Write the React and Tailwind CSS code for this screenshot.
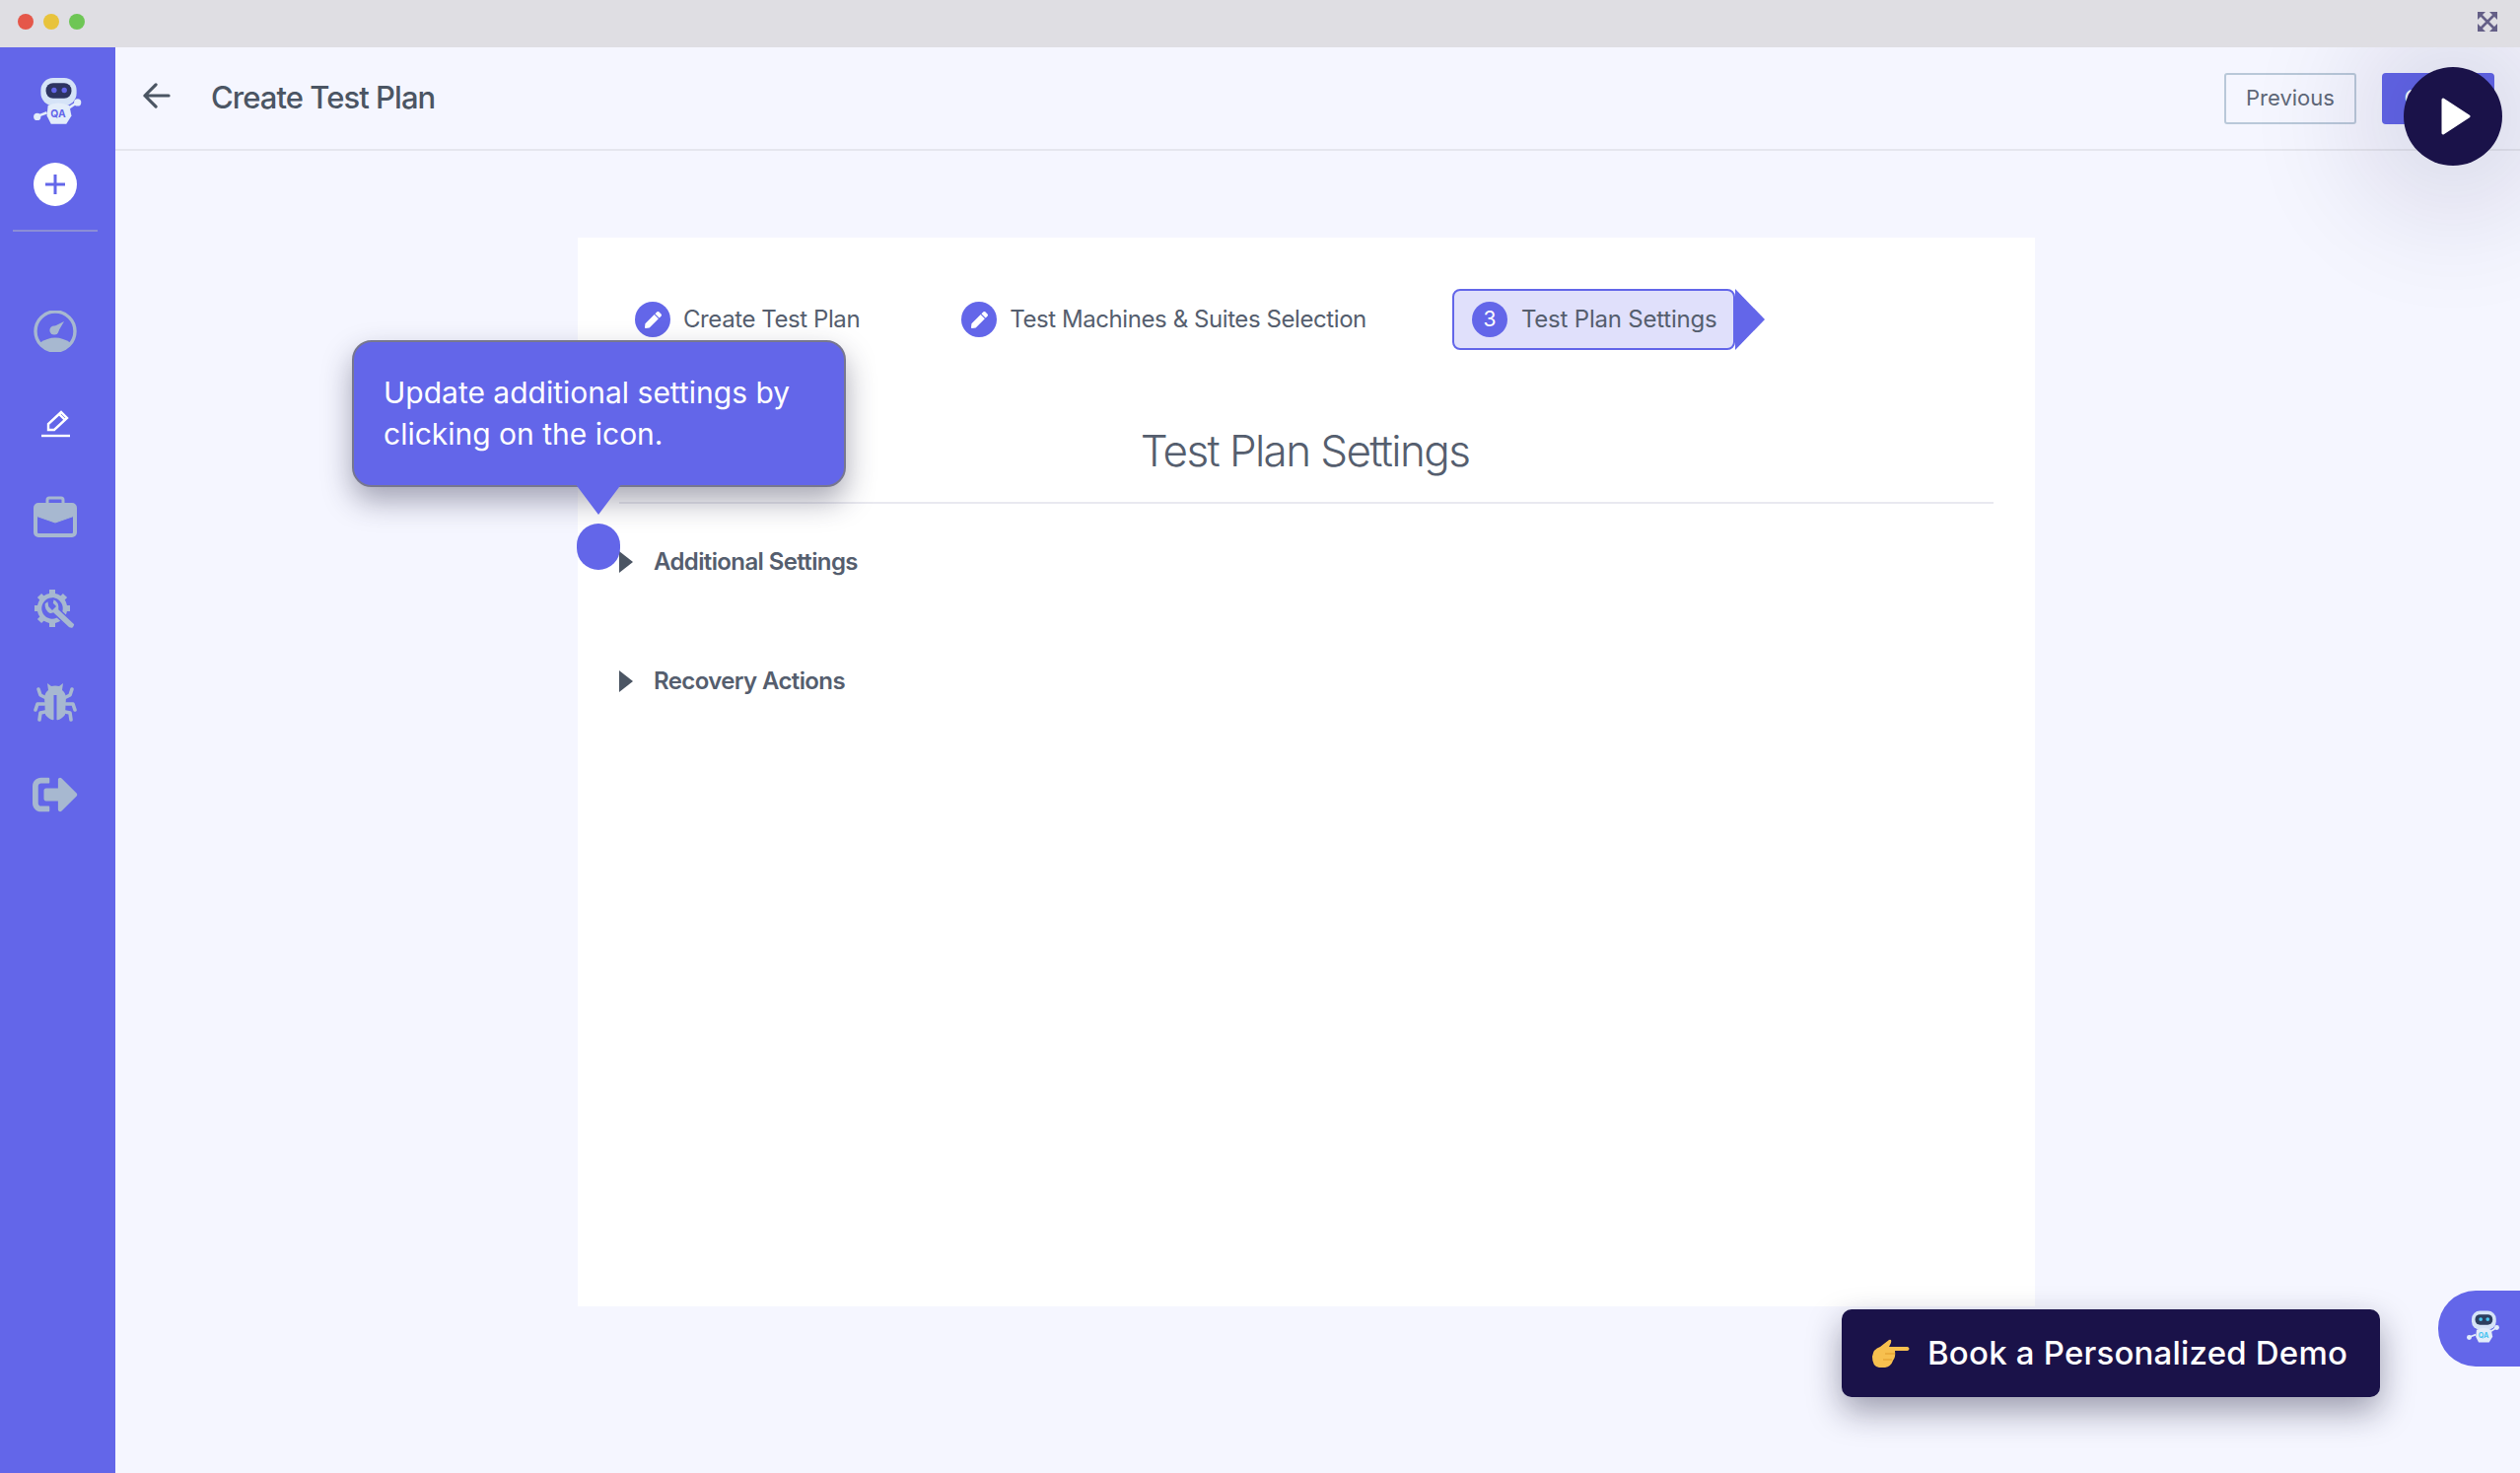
import React from 'react';
import { FaSignOutAlt, FaPen } from 'react-icons/fa';

const Robot = ({ className, visor = '#2d3461', dot = '#6366e9' }) => (
    <svg viewBox="0 0 48 56" className={className}>
        <rect x="7" y="2" width="35" height="27" rx="12" fill="#d5e3f7" />
        <rect x="12" y="7" width="25" height="15" rx="7" fill={visor} />
        <circle cx="20" cy="14" r="2.6" fill={dot} />
        <circle cx="30" cy="14" r="2.6" fill={dot} />
        <path d="M14 29 Q24 24 35 29 L37 39 L32 47 H17 L13 39 Z" fill="#e3edfa" />
        <path d="M35 31 L41 27" stroke="#e3edfa" strokeWidth="2.5" />
        <circle cx="43" cy="26" r="3.5" fill="#e3edfa" />
        <path d="M13 36 L5 39" stroke="#e3edfa" strokeWidth="2.5" />
        <circle cx="3.5" cy="40" r="3.5" fill="#e3edfa" />
        <text x="24" y="41" textAnchor="middle" fontSize="10" fontWeight="700" fill={dot} fontFamily="Inter, sans-serif">QA</text>
    </svg>
);

const Gauge = () => (
    <svg viewBox="0 0 44 42" className="w-[44px] h-[42px]" fill="#a7b8d0">
        <circle cx="22" cy="21" r="20" fill="none" stroke="#a7b8d0" strokeWidth="3.4" />
        <path d="M6 33 Q22 22 38 33 Q30 41 22 41 Q14 41 6 33 Z" />
        <circle cx="21" cy="20" r="4.6" />
        <path d="M19 17 L31 11 L24 23 Z" />
    </svg>
);

const NavPencil = () => (
    <svg viewBox="0 0 32 32" className="w-[32px] h-[32px]" fill="none" stroke="#fff" strokeWidth="2.4">
        <path d="M9 22 L9 16 L22 4 L28 10 L15 22 Z" />
        <path d="M20 6 L26 12" />
        <path d="M2 28 H31" />
    </svg>
);

const Briefcase = () => (
    <svg viewBox="0 0 44 42" className="w-[44px] h-[42px]" fill="none" stroke="#a7b8d0">
        <path d="M14 8 V4 Q14 2 16 2 H28 Q30 2 30 4 V8" strokeWidth="3" />
        <rect x="2" y="9" width="40" height="31" rx="3" strokeWidth="4" />
        <path d="M2 9 H42 V20 L22 27 L2 20 Z" fill="#a7b8d0" strokeWidth="1" />
    </svg>
);

// gear ring with a wrench lying across it
const GearWrench = () => (
    <svg viewBox="0 0 44 42" className="w-[44px] h-[42px]" fill="none">
        <g stroke="#a7b8d0" strokeWidth="6">
            <path d="M19 1 V8 M19 32 V39 M1 20 H8 M30 20 H37 M6 7 L11 12 M27 28 L32 33 M32 7 L27 12 M6 33 L11 28" />
        </g>
        <circle cx="19" cy="20" r="13" stroke="#a7b8d0" strokeWidth="4.5" />
        <path d="M15 12 L11 15 Q10 23 17 26 L20 25 L36 40 Q41 42 42 36 L26 21 Q27 13 20 10 L19 15 L22 18 L19 21 L16 18 Z" fill="#a7b8d0" stroke="#6366e9" strokeWidth="1.5" />
    </svg>
);

const Beetle = () => (
    <svg viewBox="0 0 44 40" className="w-[44px] h-[40px]" fill="#a7b8d0">
        <path d="M15 8 L14 1 L18 4 Q22 3 26 4 L30 1 L29 8 Q32 10 33 15 L32 33 Q27 39 23.5 38 V13 H20.5 V38 Q17 39 12 33 L11 15 Q12 10 15 8 Z" />
        <g fill="none" stroke="#a7b8d0" strokeWidth="3.6" strokeLinecap="round" strokeLinejoin="round">
            <path d="M11 15 L7 13 L5 7" />
            <path d="M33 15 L37 13 L39 7" />
            <path d="M11 22 H4 L2 28" />
            <path d="M33 22 H40 L42 28" />
            <path d="M12 30 L7 31 L6 38" />
            <path d="M32 30 L37 31 L38 38" />
        </g>
    </svg>
);

const ExpandIcon = () => (
    <svg viewBox="0 0 20 20" className="w-[20px] h-[20px]" fill="#645f87">
        <path d="M0 0 H8 L0 8 Z M20 0 V8 L12 0 Z M0 20 V12 L8 20 Z M20 20 H12 L20 12 Z" />
        <path d="M3 3 L17 17 M17 3 L3 17" stroke="#645f87" strokeWidth="2.6" />
    </svg>
);

const PointingHand = () => (
    <svg viewBox="0 0 40 30" className="w-[40px] h-[30px]">
        <path d="M1 18 Q2 10 9 8 L18 1 Q21 0 20 4 L18 8 H37 Q40 10 37 12 H24 Q25 18 22 22 Q20 28 14 29 H8 Q1 28 1 18 Z" fill="#f7c04f" />
        <path d="M14 15 H24 M12 21 H21" stroke="#e09a2a" strokeWidth="1.2" fill="none" />
    </svg>
);

const Step = ({ label }) => (
    <div className="flex items-center gap-[13px]">
        <div className="w-[36px] h-[36px] rounded-full bg-[#6366e9] flex items-center justify-center">
            <FaPen color="#fff" size={17} />
        </div>
        <span className="text-[24px] tracking-[-0.42px] text-[#555e6e]">{label}</span>
    </div>
);

const App = () => {
    return (
        <div className="relative w-[2556px] h-[1494px] overflow-hidden bg-[#f5f6ff] font-['Inter',sans-serif]">
            {/* Title bar */}
            <div className="relative z-20 h-[48px] bg-[#dfdee3] flex items-center justify-between pl-[18px] pr-[23px] pb-[4px]">
                <div className="flex gap-[10px]">
                    <span className="w-[16px] h-[16px] rounded-full bg-[#e5574a]" />
                    <span className="w-[16px] h-[16px] rounded-full bg-[#e8c33c]" />
                    <span className="w-[16px] h-[16px] rounded-full bg-[#6ec655]" />
                </div>
                <ExpandIcon />
            </div>

            <div className="flex h-[1446px]">
                {/* Sidebar */}
                <div className="w-[117px] bg-[#6366e9] flex flex-col items-center shrink-0">
                    <Robot className="w-[50px] h-[58px] mt-[29px] ml-[1px]" />
                    <div className="mt-[30px] w-[44px] h-[44px] rounded-full bg-white flex items-center justify-center -ml-[5px]">
                        <svg viewBox="0 0 20 20" className="w-[20px] h-[20px]" stroke="#6366e9" strokeWidth="3">
                            <path d="M10 0 V20 M0 10 H20" />
                        </svg>
                    </div>
                    <div className="mt-[24px] w-[86px] h-[2px] bg-[#8b8dd6] -ml-[5px]" />
                    <div className="flex flex-col items-center gap-[52px] mt-[80px] -ml-[5px]">
                        <div className="h-[42px] flex items-center"><Gauge /></div>
                        <div className="h-[42px] flex items-center"><NavPencil /></div>
                        <div className="h-[42px] flex items-center"><Briefcase /></div>
                        <div className="h-[42px] flex items-center"><GearWrench /></div>
                        <div className="h-[42px] flex items-center"><Beetle /></div>
                        <div className="h-[42px] flex items-center"><FaSignOutAlt color="#a7b8d0" size={46} /></div>
                    </div>
                </div>

                {/* Main */}
                <div className="flex-1">
                    <div className="h-[105px] border-b-2 border-[#e5e6ee] flex items-center pl-[28px] pr-[26px]">
                        <svg viewBox="0 0 30 28" className="w-[28px] h-[26px] -mt-[6px]" fill="none" stroke="#4b5563" strokeWidth="3.4" strokeLinecap="round" strokeLinejoin="round">
                            <path d="M28 14 H2 M14 2 L2 14 L14 26" />
                        </svg>
                        <h1 className="ml-[41px] text-[31px] font-medium text-[#4b5563] tracking-[-0.95px]">Create Test Plan</h1>
                        <div className="ml-auto flex gap-[26px]">
                            <button className="w-[134px] h-[52px] border-2 border-[#b9c8d9] rounded-[3px] text-[22px] text-[#5f6878]">Previous</button>
                            <button className="w-[114px] h-[52px] bg-[#6366e9] rounded-[4px] text-[22px] text-white">Create</button>
                        </div>
                    </div>

                    <div className="ml-[469px] mt-[88px] w-[1478px] h-[1084px] bg-white pt-[52px] px-[42px]">
                        {/* Stepper */}
                        <div className="flex items-center h-[62px] pl-[16px]">
                            <Step label="Create Test Plan" />
                            <div className="w-[103px]" />
                            <Step label="Test Machines & Suites Selection" />
                            <div className="flex items-center ml-[87px]">
                                <div className="flex items-center gap-[14px] w-[287px] h-[62px] pl-[18px] bg-[#e0e0fb] border-2 border-[#6366e9] rounded-[8px]">
                                    <div className="w-[36px] h-[36px] rounded-full bg-[#6366e9] flex items-center justify-center text-white text-[21px]">3</div>
                                    <span className="text-[24px] tracking-[-0.2px] text-[#555e6e]">Test Plan Settings</span>
                                </div>
                                <div className="w-0 h-0 border-y-[31px] border-y-transparent border-l-[30px] border-l-[#6366e9]" />
                            </div>
                        </div>

                        <h2 className="mt-[74px] pr-[3px] text-center text-[44px] leading-[56px] font-light text-[#555e6e] tracking-[-1.6px]">Test Plan Settings</h2>
                        <div className="mt-[24px] h-[2px] bg-[#e9e9f0]" />

                        {/* Accordion rows */}
                        <div className="flex flex-col gap-[91px] mt-[44px]">
                            <div className="flex items-center h-[30px]">
                                <span className="w-0 h-0 border-y-[11px] border-y-transparent border-l-[14px] border-l-[#4b5563]" />
                                <span className="ml-[21px] text-[24px] font-semibold text-[#555e6e] tracking-[-0.62px]">Additional Settings</span>
                            </div>
                            <div className="flex items-center h-[30px]">
                                <span className="w-0 h-0 border-y-[11px] border-y-transparent border-l-[14px] border-l-[#4b5563]" />
                                <span className="ml-[21px] text-[24px] font-semibold text-[#555e6e] tracking-[-0.62px]">Recovery Actions</span>
                            </div>
                        </div>
                    </div>
                </div>
            </div>

            {/* Tour overlay */}
            <div className="absolute z-10 left-[357px] top-[345px] w-[501px] h-[149px] bg-[#6366e9] border-2 border-[#77778f] rounded-[20px] shadow-[0_14px_30px_rgba(40,40,70,0.4)] pl-[30px] pt-[31px] text-[30px] leading-[41.5px] text-white">
                Update additional settings by
                <br />
                clicking on the icon.
            </div>
            <div className="absolute z-10 left-[583px] top-[490px] w-0 h-0 border-x-[24px] border-x-transparent border-t-[32px] border-t-[#6366e9]" />
            <div className="absolute z-10 left-[585px] top-[531px] w-[44px] h-[47px] rounded-full bg-[#6366e9]" />

            {/* Play button */}
            <div className="absolute z-10 left-[2438px] top-[68px] w-[100px] h-[100px] rounded-full bg-[#1a1249] shadow-[0_0_120px_50px_rgba(26,18,73,0.12)] flex items-center justify-center">
                <svg viewBox="0 0 30 38" className="w-[30px] h-[38px] ml-[6px]" fill="#fff" stroke="#fff" strokeWidth="3" strokeLinejoin="round">
                    <path d="M2 2 L28 19 L2 36 Z" />
                </svg>
            </div>

            {/* Demo button */}
            <div className="absolute z-10 left-[1868px] top-[1328px] w-[546px] h-[89px] bg-[#1a1249] rounded-[10px] shadow-[0_14px_34px_rgba(20,20,50,0.4)] flex items-center pl-[30px] gap-[17px]">
                <PointingHand />
                <span className="text-[33px] font-medium text-white tracking-[0.2px]">Book a Personalized Demo</span>
            </div>

            {/* Chat pill */}
            <div className="absolute z-10 left-[2473px] top-[1309px] w-[83px] h-[77px] bg-[#6366e9] rounded-l-[38px] flex items-center justify-center pl-[8px]">
                <Robot className="w-[34px] h-[40px]" visor="#2d3f5f" dot="#48c4f0" />
            </div>
        </div>
    );
};

export default App;
